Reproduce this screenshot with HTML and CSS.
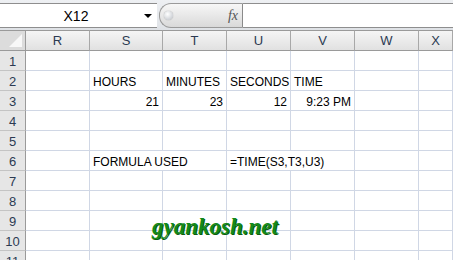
FILE: index.html
```html
<!DOCTYPE html>
<html>
<head>
  <meta charset="UTF-8">
  <title>TIME formula</title>
  <link rel="stylesheet" href="styles.css">
</head>
<body>
  <div id="formulaBar">
    <div class="name-box">
      <span class="name-text">X12</span>
      <span class="name-arrow"></span>
    </div>
    <div class="fx-pill">
      <span class="fx-knob"></span>
      <span class="fx-label">fx</span>
    </div>
    <div class="formula-input"></div>
  </div>

  <div id="sheet">
    <div class="corner"><span class="corner-tri"></span></div>
    <div class="col-head">R</div>
    <div class="col-head">S</div>
    <div class="col-head">T</div>
    <div class="col-head">U</div>
    <div class="col-head">V</div>
    <div class="col-head">W</div>
    <div class="col-head">X</div>

    <div class="row-head">1</div>
    <div class="cell"></div><div class="cell"></div><div class="cell"></div><div class="cell"></div><div class="cell"></div><div class="cell"></div><div class="cell"></div>

    <div class="row-head">2</div>
    <div class="cell"></div>
    <div class="cell">HOURS</div>
    <div class="cell">MINUTES</div>
    <div class="cell">SECONDS</div>
    <div class="cell">TIME</div>
    <div class="cell"></div><div class="cell"></div>

    <div class="row-head">3</div>
    <div class="cell"></div>
    <div class="cell num">21</div>
    <div class="cell num">23</div>
    <div class="cell num">12</div>
    <div class="cell num">9:23 PM</div>
    <div class="cell"></div><div class="cell"></div>

    <div class="row-head">4</div>
    <div class="cell"></div><div class="cell"></div><div class="cell"></div><div class="cell"></div><div class="cell"></div><div class="cell"></div><div class="cell"></div>

    <div class="row-head">5</div>
    <div class="cell"></div><div class="cell"></div><div class="cell"></div><div class="cell"></div><div class="cell"></div><div class="cell"></div><div class="cell"></div>

    <div class="row-head">6</div>
    <div class="cell"></div>
    <div class="cell span2">FORMULA USED</div>
    <div class="cell span2">=TIME(S3,T3,U3)</div>
    <div class="cell"></div><div class="cell"></div>

    <div class="row-head">7</div>
    <div class="cell"></div><div class="cell"></div><div class="cell"></div><div class="cell"></div><div class="cell"></div><div class="cell"></div><div class="cell"></div>

    <div class="row-head">8</div>
    <div class="cell"></div><div class="cell"></div><div class="cell"></div><div class="cell"></div><div class="cell"></div><div class="cell"></div><div class="cell"></div>

    <div class="row-head">9</div>
    <div class="cell"></div><div class="cell"></div><div class="cell"></div><div class="cell"></div><div class="cell"></div><div class="cell"></div><div class="cell"></div>

    <div class="row-head">10</div>
    <div class="cell"></div><div class="cell"></div><div class="cell"></div><div class="cell"></div><div class="cell"></div><div class="cell"></div><div class="cell"></div>

    <div class="row-head">11</div>
    <div class="cell"></div><div class="cell"></div><div class="cell"></div><div class="cell"></div><div class="cell"></div><div class="cell"></div><div class="cell"></div>

    <div class="watermark">gyankosh.net</div>
  </div>
</body>
</html>
```

FILE: styles.css
```css
body {
  margin: 0;
  width: 453px;
  height: 260px;
  overflow: hidden;
  background: #fff;
  font-family: "Liberation Sans", Arial, sans-serif;
  font-size: 12px;
  color: #000;
}

#formulaBar {
  display: flex;
  height: 30px;
  box-sizing: border-box;
  padding-top: 3px;
  padding-bottom: 2px;
  background: linear-gradient(#eef0f3, #dfe2e6);
}

.name-box {
  width: 157px;
  display: flex;
  align-items: center;
  background: #fff;
  border-top: 1px solid #8e8e8e;
  border-bottom: 1px solid #8e8e8e;
  box-sizing: border-box;
}

.name-text {
  flex: 1;
  text-align: center;
  font-size: 14px;
  padding-left: 8px;
}

.name-arrow {
  width: 0;
  height: 0;
  margin-right: 5px;
  border-left: 4px solid transparent;
  border-right: 4px solid transparent;
  border-top: 4px solid #000;
}

.fx-pill {
  width: 84px;
  margin-left: 2px;
  display: flex;
  align-items: center;
  justify-content: space-between;
  background: linear-gradient(#f7f7f7, #d9d9d9);
  border: 1px solid #9a9a9a;
  border-right: 1px solid #8a8a8a;
  border-radius: 12px 0 0 12px;
  box-sizing: border-box;
}

.fx-knob {
  width: 9px;
  height: 9px;
  margin-left: 4px;
  border-radius: 50%;
  background: radial-gradient(circle at 40% 35%, #fff, #b9bec5);
  box-shadow: 0 0 1px #888;
}

.fx-label {
  margin-right: 4px;
  font-family: "Liberation Serif", serif;
  font-style: italic;
  font-size: 14px;
  color: #555;
}

.formula-input {
  flex: 1;
  background: #fff;
  border-top: 1px solid #8e8e8e;
  border-bottom: 1px solid #8e8e8e;
}

#sheet {
  position: relative;
  display: grid;
  grid-template-columns: 26px 64px 73px 64px 64px 64px 64px 1fr;
  grid-template-rows: 21px;
  grid-auto-rows: 20px;
}

.corner {
  position: relative;
  background: #dcdcdc;
  border-top: 1px solid #9a9a9a;
  border-right: 1px solid #9a9a9a;
  border-bottom: 1px solid #9a9a9a;
}

.corner-tri {
  position: absolute;
  right: 3px;
  bottom: 3px;
  width: 0;
  height: 0;
  border-left: 13px solid transparent;
  border-bottom: 13px solid #f8f8f8;
}

.col-head {
  display: flex;
  align-items: center;
  justify-content: center;
  background: linear-gradient(#f5f5f5, #e1e1e1);
  border-top: 1px solid #9a9a9a;
  border-right: 1px solid #a8a8a8;
  border-bottom: 1px solid #9a9a9a;
  color: #2b3a52;
  font-size: 13px;
}

.row-head {
  display: flex;
  align-items: center;
  justify-content: center;
  background: #e6e6e6;
  border-right: 1px solid #9a9a9a;
  border-bottom: 1px solid #c4c4c4;
  color: #2b3a52;
  font-size: 13px;
  padding-top: 1px;
}

.cell {
  border-right: 1px solid #d0d7e5;
  border-bottom: 1px solid #d0d7e5;
  padding: 3px 3px 0 3px;
  line-height: 17px;
  white-space: nowrap;
  overflow: visible;
}

.cell.num {
  text-align: right;
}

.cell.span2 {
  grid-column: span 2;
}

.watermark {
  position: absolute;
  left: 152px;
  top: 184px;
  font-family: "Liberation Serif", serif;
  font-style: italic;
  font-weight: bold;
  font-size: 23px;
  color: #138a1a;
  text-shadow: 1px 1px 0 #0b5c10;
}
```
